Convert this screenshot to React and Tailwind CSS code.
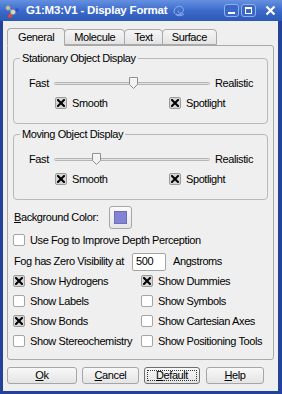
import React from 'react';

const Check = ({ checked, label, className = '' }) => (
  <div className={`flex items-center gap-[5px] ${className}`}>
    <div
      className={`w-[12px] h-[12px] rounded-[2px] border flex items-center justify-center ${
        checked ? 'bg-[#d6d6d6] border-[#9a9a9a]' : 'bg-white border-[#a4a4a4]'
      }`}
    >
      {checked && (
        <svg width="8" height="8" viewBox="0 0 8 8">
          <path d="M1 1 L7 7 M7 1 L1 7" stroke="#000" strokeWidth="2" strokeLinecap="square" />
        </svg>
      )}
    </div>
    <span>{label}</span>
  </div>
);

const Slider = ({ pos }) => (
  <div className="flex items-center h-[16px] pl-[15px] pr-[14px]">
    <span>Fast</span>
    <div className="relative flex-1 mx-[5px] h-[16px] flex items-center">
      <div className="w-full h-[3px] rounded-full bg-[#e2e2e2] border border-[#b4b4b4]" />
      <svg className={`absolute top-[2px] ${pos}`} width="9" height="12" viewBox="0 0 9 12">
        <path d="M0.5 0.5 H8.5 V7.5 L4.5 11.5 L0.5 7.5 Z" fill="#f2f2f2" stroke="#8e8e8e" />
        <path d="M1.5 1.5 H7.5" stroke="#fff" />
      </svg>
    </div>
    <span>Realistic</span>
  </div>
);

const Group = ({ title, pos, first }) => (
  <fieldset className={`border border-[#b9b9b9] rounded-[4px] pb-[12px] ${first ? '' : 'mt-[3px]'}`}>
    <legend className="ml-[6px] px-[2px] leading-[14px]">{title}</legend>
    <div className="mt-[10px]">
      <Slider pos={pos} />
    </div>
    <div className="flex items-center h-[16px] mt-[4px]">
      <Check checked label="Smooth" className="ml-[41px] w-[114px]" />
      <Check checked label="Spotlight" />
    </div>
  </fieldset>
);

const Btn = ({ u, rest, w, focus }) => (
  <div
    className={`h-[17px] ${w} rounded-[3px] border ${
      focus ? 'border-[#6e6e6e]' : 'border-[#a6a6a6]'
    } bg-gradient-to-b from-[#f8f8f8] to-[#e4e4e4] flex items-center justify-center p-[2px]`}
  >
    <div
      className={`w-full h-full flex items-center justify-center ${
        focus ? 'border border-dotted border-[#333]' : ''
      }`}
    >
      <span>
        <span className="underline">{u}</span>
        {rest}
      </span>
    </div>
  </div>
);

const Tab = ({ label, active }) => (
  <div
    className={`px-[9px] border border-[#a9a9a9] rounded-t-[4px] flex items-center ${
      active
        ? 'h-[18px] px-[10px] bg-[#efefef] border-b-[#efefef] -mb-px z-10 relative'
        : 'h-[16px] bg-gradient-to-b from-[#f6f6f6] to-[#e3e3e3] -ml-px'
    }`}
  >
    {label}
  </div>
);

export default function App() {
  return (
    <div className="w-[282px] h-[394px] bg-[#23439a] flex flex-col font-['Liberation_Sans',Arial,sans-serif] text-[11px] tracking-[-0.4px] text-black overflow-hidden">
      <div className="h-[21px] shrink-0 flex items-center bg-gradient-to-b from-[#6690e0] via-[#3c6bcb] to-[#2d58b6] px-[4px]">
        <svg width="16" height="16" viewBox="0 0 16 16">
          <path d="M4 5 L9 9 L6 13 M9 9 L13 7" stroke="#c9c9c9" strokeWidth="1.2" fill="none" />
          <circle cx="4" cy="5" r="2.4" fill="#bfbfbf" stroke="#7a7a7a" strokeWidth="0.6" />
          <circle cx="9" cy="9" r="2.6" fill="#d8d8d8" stroke="#7a7a7a" strokeWidth="0.6" />
          <circle cx="6" cy="13" r="2" fill="#e24a2a" />
          <circle cx="13" cy="7" r="1.8" fill="#2b4fd0" />
        </svg>
        <span className="ml-[6px] text-white font-bold text-[11.5px] tracking-[-0.2px]">G1:M3:V1 - Display Format</span>
        <svg className="ml-[4px]" width="16" height="16" viewBox="0 0 16 16">
          <path
            d="M3 9 C3 4 8 2 11 4 C13 5.5 13 9 10 10 C8 10.7 6.5 9 7.5 7.5 M3 9 C4 13 10 14 13 11 M5 11 C7 12 10 12 12 10"
            stroke="#8fb0ec"
            strokeWidth="1"
            fill="none"
          />
        </svg>
        <div className="flex-1" />
        <div className="flex items-center gap-[2px] mr-[9px]">
          <div className="w-[15px] h-[13px] rounded-[3px] border border-[#8fb0ec] bg-[#3b68c6] flex items-end justify-center pb-[2px]">
            <div className="w-[7px] h-[2px] bg-white" />
          </div>
          <div className="w-[15px] h-[13px] rounded-[3px] border border-[#8fb0ec] bg-[#3b68c6] flex items-center justify-center">
            <div className="w-[7px] h-[7px] border border-white border-t-2" />
          </div>
        </div>
        <svg className="mr-[2px]" width="11" height="11" viewBox="0 0 11 11">
          <path d="M1.5 1.5 L9.5 9.5 M9.5 1.5 L1.5 9.5" stroke="#fff" strokeWidth="2.2" />
        </svg>
      </div>

      <div className="flex-1 ml-[3px] mr-[4px] mb-[3px] bg-[#efefef] flex flex-col px-[4px] pt-[6px]">
        <div className="flex items-end h-[18px]">
          <Tab label="General" active />
          <Tab label="Molecule" />
          <Tab label="Text" />
          <Tab label="Surface" />
        </div>
        <div className="h-[315px] border border-[#a9a9a9] rounded-b-[3px] rounded-tr-[3px] px-[5px] pt-[5px] flex flex-col">
          <Group title="Stationary Object Display" pos="left-[75px]" first />
          <Group title="Moving Object Display" pos="left-[38px]" />

          <div className="flex items-center h-[23px] mt-[6px] pl-[1px]">
            <span className="w-[95px]">
              <span className="underline">B</span>ackground Color:
            </span>
            <div className="w-[23px] h-[23px] rounded-[3px] border border-[#a6a6a6] bg-gradient-to-b from-[#fafafa] to-[#e6e6e6] flex items-center justify-center">
              <div className="w-[13px] h-[13px] bg-[#8383d6] border border-[#6d6db8]" />
            </div>
          </div>

          <div className="flex items-center h-[16px] mt-[3px]">
            <Check label="Use Fog to Improve Depth Perception" />
          </div>

          <div className="flex items-center h-[19px] mt-[4px] pl-[1px]">
            <span className="w-[118px]">Fog has Zero Visibility at</span>
            <div className="w-[34px] h-[18px] bg-white border border-[#a4a4a4] rounded-[2px] flex items-center px-[3px]">
              500
            </div>
            <span className="ml-[7px]">Angstroms</span>
          </div>

          <div className="grid grid-cols-[128px_1fr]">
            {[
              ['Show Hydrogens', true, 'Show Dummies', true],
              ['Show Labels', false, 'Show Symbols', false],
              ['Show Bonds', true, 'Show Cartesian Axes', false],
              ['Show Stereochemistry', false, 'Show Positioning Tools', false],
            ].map(([a, ac, b, bc]) => (
              <React.Fragment key={a}>
                <div className="h-[20px] flex items-center">
                  <Check checked={ac} label={a} />
                </div>
                <div className="h-[20px] flex items-center">
                  <Check checked={bc} label={b} />
                </div>
              </React.Fragment>
            ))}
          </div>
        </div>

        <div className="flex items-center mt-[7px]">
          <Btn u="O" rest="k" w="w-[70px]" />
          <Btn u="C" rest="ancel" w="w-[57px] ml-[5px]" />
          <Btn u="D" rest="efault" w="w-[56px] ml-[5px]" focus />
          <Btn u="H" rest="elp" w="w-[58px] ml-[6px]" />
        </div>
      </div>
    </div>
  );
}
